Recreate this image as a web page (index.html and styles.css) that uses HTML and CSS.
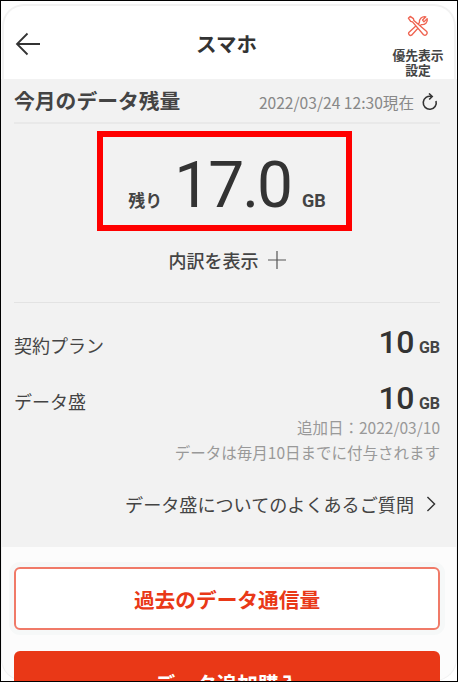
FILE: index.html
```html
<!DOCTYPE html>
<html lang="ja">
<head>
<meta charset="utf-8">
<title>スマホ</title>
<link rel="stylesheet" href="styles.css">
</head>
<body>
<div class="frame">
  <div class="screen">
    <header class="topbar">
      <svg class="back" viewBox="0 0 26 24" width="26" height="24"><path d="M25 12H2M12.500 1.500 2 12l10.500 10.500" fill="none" stroke="#333" stroke-width="1.800"/></svg>
      <h1 class="title">スマホ</h1>
      <div class="prio">
        <svg class="tools" viewBox="0 0 24 24" width="22" height="22" stroke="#ef6350" stroke-width="1.500" stroke-linejoin="round">
          <path fill="#fff" d="M2 19 13.500 8.500C13 4.500 16.500 1 20.500 2L17 5.500 18.500 7.500 22 4C23 8 19.500 11 15.500 10.500L5 22A2.200 2.200 0 0 1 2 19z"/>
          <path fill="#fff" d="M1.500 3.500 3.500 1.500 7 4 7.500 6 21.500 18A2.500 2.500 0 0 1 18 21.500L6 7.500 4 7z"/>
        </svg>
        <div class="prio-text">優先表示<br>設定</div>
      </div>
    </header>
    <main class="content">
      <div class="section-head">
        <h2 class="section-title">今月のデータ残量</h2>
        <div class="stamp">2022/03/24 12:30現在
          <svg class="reload" viewBox="0 0 18 18" width="18" height="18" fill="none" stroke="#333" stroke-width="1.600"><path d="M10.500 3.500A6.500 6.500 0 1 0 15 8"/><path d="M8 .5l3.200 3-3 3"/></svg>
        </div>
      </div>
      <div class="remain-wrap">
        <div class="remain-box">
          <span class="remain-label">残り</span>
          <span class="remain-num">17.0</span>
          <span class="remain-unit">GB</span>
        </div>
      </div>
      <div class="detail">内訳を表示
        <svg class="plus" viewBox="0 0 18 18" width="18" height="18"><path d="M0 9h18M9 0v18" stroke="#555" stroke-width="1.200"/></svg>
      </div>
      <hr class="rule">
      <div class="row row-plan">
        <span class="row-label">契約プラン</span>
        <span class="amount"><b class="amount-num">10</b> <b class="amount-unit">GB</b></span>
      </div>
      <div class="row row-data">
        <span class="row-label">データ盛</span>
        <span class="amount"><b class="amount-num">10</b> <b class="amount-unit">GB</b></span>
      </div>
      <p class="note note-date">追加日：2022/03/10</p>
      <p class="note">データは毎月10日までに付与されます</p>
      <div class="faq">データ盛についてのよくあるご質問
        <svg class="chev" viewBox="0 0 10 18" width="10" height="16"><path d="M1 1l8 8-8 8" fill="none" stroke="#333" stroke-width="1.600"/></svg>
      </div>
    </main>
    <footer class="actions">
      <button class="btn btn-outline">過去のデータ通信量</button>
      <button class="btn btn-solid">データ追加購入</button>
    </footer>
  </div>
</div>
</body>
</html>
```

FILE: styles.css
```css
* { box-sizing: border-box; }
html, body { margin: 0; padding: 0; height: 682px; overflow: hidden; background: #000; }
body { font-family: "Noto Sans CJK JP", "Noto Sans", sans-serif; color: #333; }
.frame { width: 458px; height: 682px; padding: 1px; background: #000; }
.screen { height: 100%; background: #fff; overflow: hidden; display: flex; flex-direction: column; }
.topbar { height: 75px; flex: none; margin: 3px 1px 0; padding-right: 5px; background: #fff; border: 2px solid #f2f2f2; border-bottom: 0; border-radius: 22px 22px 0 0; display: flex; align-items: center; justify-content: center; position: relative; }
.back { position: absolute; left: 11px; top: 26px; }
.title { margin: 0; font-size: 20.500px; font-weight: 700; line-height: 1; position: relative; top: 1px; }
.prio { position: absolute; right: 8px; top: 9px; width: 56px; display: flex; flex-direction: column; align-items: center; }
.tools { margin-bottom: 11px; }
.prio-text { font-size: 12.800px; font-weight: 700; line-height: 14.500px; text-align: center; white-space: nowrap; color: #444; }
.content { flex: 1; padding: 0 17px 0 13px; background: #f2f2f2; }
.section-head { height: 45px; display: flex; justify-content: space-between; align-items: center; border-bottom: 2px solid #e9e9e9; }
.section-title { margin: 0; font-size: 20.800px; font-weight: 700; line-height: 1; color: #444; }
.stamp { display: flex; align-items: center; gap: 7px; font-size: 15.600px; color: #888; padding-right: 1px; position: relative; top: 1px; }
.reload { flex: none; }
.remain-wrap { display: flex; justify-content: center; margin-top: 7px; padding-right: 5px; }
.remain-box { width: 255px; height: 100px; border: 6px solid #f00; display: flex; align-items: baseline; justify-content: center; padding: 11px 0 0 5px; }
.remain-label { font-size: 17px; font-weight: 700; color: #444; margin-right: 12px; }
.remain-num { font-family: Roboto, sans-serif; font-size: 64px; letter-spacing: -2px; line-height: 76px; color: #333; }
.remain-unit { font-family: Roboto, sans-serif; font-size: 18px; font-weight: 700; color: #444; margin-left: 11px; }
.detail { display: flex; align-items: center; justify-content: center; gap: 9px; margin-top: 17px; height: 24px; font-size: 18px; font-weight: 500; color: #444; }
.rule { border: 0; border-top: 1px solid #e3e3e3; margin: 30px 0 0; }
.row { display: flex; justify-content: space-between; align-items: center; height: 36px; }
.row-plan { margin-top: 24px; }
.row-data { margin-top: 20px; }
.row-label { font-size: 18px; color: #444; }
.amount { display: flex; align-items: baseline; gap: 5px; margin-bottom: 6px; }
.amount-num { font-family: Roboto, sans-serif; font-size: 32px; font-weight: 500; letter-spacing: -.5px; color: #333; }
.amount-unit { font-family: Roboto, sans-serif; font-size: 16px; font-weight: 700; color: #444; }
.note { margin: 0; text-align: right; font-size: 15.500px; line-height: 25px; color: #999; }
.note-date { margin-top: -4px; }
.faq { display: flex; justify-content: flex-end; align-items: center; gap: 12px; margin-top: 25px; height: 28px; font-size: 18.100px; color: #444; padding-right: 4px; }
.chev { flex: none; }
.actions { flex: none; height: 134px; background: #fcfcfc; padding: 20px 16px 0 12px; display: flex; flex-direction: column; gap: 21px; border: 1px solid #f2f2f2; border-top: 0; border-radius: 0 0 22px 22px; }
.btn { flex: none; width: 100%; height: 63px; border-radius: 6px; font-family: inherit; font-size: 20.700px; font-weight: 700; }
.btn-outline { background: #fff; color: #e93817; border: 2px solid #f07a68; box-shadow: 0 0 0 5px #f6f8f8; }
.btn-solid { background: #e93817; color: #fff; border: 0; }
```
